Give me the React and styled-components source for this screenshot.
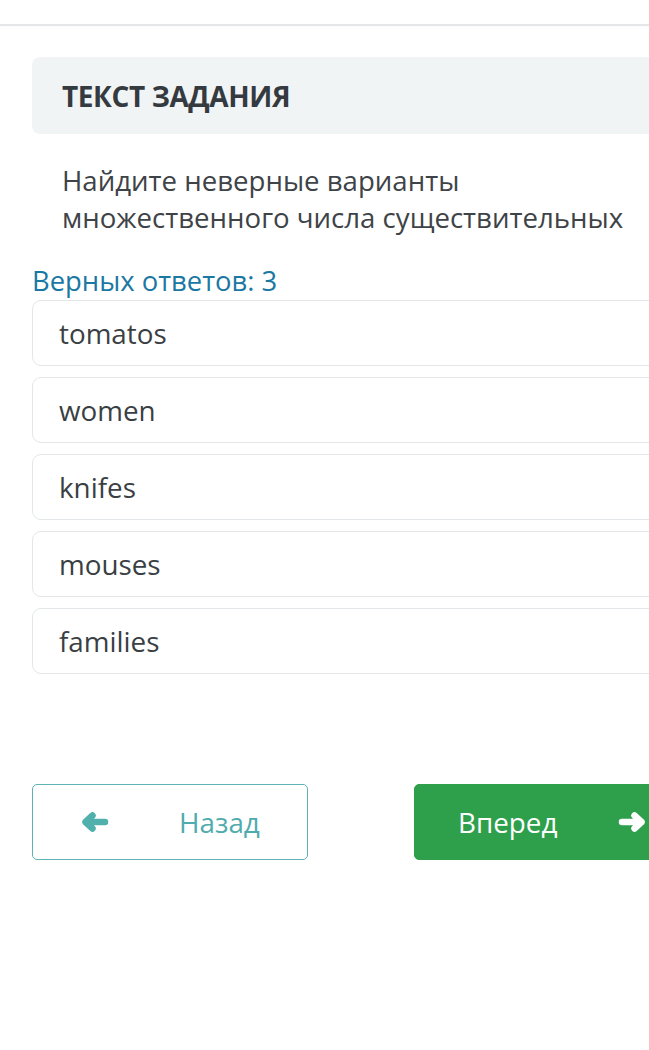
import React from "react";
import styled, { createGlobalStyle } from "styled-components";

const Global = createGlobalStyle`
  html, body { margin: 0; padding: 0; background: #fff; overflow: hidden; }
  body { font-family: "Open Sans", "Noto Sans", sans-serif; }
`;

const TopBar = styled.div`
  height: 24px;
  border-bottom: 2px solid #e4e6e7;
  box-shadow: 0 2px 3px rgba(0,0,0,0.02);
`;

const Main = styled.main`
  width: 656px;
  padding: 31px 0 0 32px;
  display: flex;
  flex-direction: column;
`;

const HeaderBox = styled.div`
  height: 77px;
  background: #f1f4f5;
  border-radius: 8px;
  display: flex;
  align-items: center;
  padding-left: 30px;
`;

const Title = styled.h2`
  margin: 0;
  font-size: 28px;
  font-weight: 700;
  color: #343a40;
  letter-spacing: -0.4px;
`;

const Question = styled.p`
  margin: 28px 0 0 30px;
  font-size: 27.6px;
  line-height: 37px;
  color: #3e4347;
  width: 600px;
`;

const Counter = styled.div`
  margin-top: 28px;
  font-size: 27.4px;
  line-height: 34px;
  color: #1b78a3;
  margin-bottom: 2px;
`;

const Options = styled.div`
  display: flex;
  flex-direction: column;
  gap: 11px;
`;

const Option = styled.div`
  height: 64px;
  border: 1px solid #e3e7e9;
  border-radius: 9px;
  display: flex;
  align-items: center;
  padding-left: 26px;
  font-size: 27.8px;
  color: #3a3f44;
`;

const Buttons = styled.div`
  display: flex;
  gap: 106px;
  margin-top: 110px;
`;

const Button = styled.button`
  width: 276px;
  height: 76px;
  box-sizing: border-box;
  border-radius: 5px;
  font-family: inherit;
  font-size: 27.8px;
  display: flex;
  align-items: center;
  padding: 0;
  border: 1px solid ${p => (p.$primary ? "#2e9f4b" : "#5cb3b5")};
  background: ${p => (p.$primary ? "#2e9f4b" : "#fff")};
  color: ${p => (p.$primary ? "#fff" : "#4fabad")};
  flex-shrink: 0;
`;

const ArrowSvg = styled.svg`
  width: 28px;
  height: 20px;
  flex-shrink: 0;
  margin-left: ${p => p.$ml}px;
`;

const BackLabel = styled.span`
  margin-left: 70px;
`;

const NextLabel = styled.span`
  margin-left: 43px;
`;

function Arrow({ dir, color, ml }) {
  const d = dir === "left" ? "M11.5 3.5 L4.5 10 L11.5 16.5 M4.5 10 H24" : "M16.5 3.5 L23.5 10 L16.5 16.5 M23.5 10 H4";
  return (
    <ArrowSvg viewBox="0 0 28 20" $ml={ml}>
      <path d={d} fill="none" stroke={color} strokeWidth="6.5" strokeLinecap="round" strokeLinejoin="round" />
    </ArrowSvg>
  );
}

const options = ["tomatos", "women", "knifes", "mouses", "families"];

export default function App() {
  return (
    <>
      <Global />
      <TopBar />
      <Main>
        <HeaderBox>
          <Title>ТЕКСТ ЗАДАНИЯ</Title>
        </HeaderBox>
        <Question>Найдите неверные варианты множественного числа существительных</Question>
        <Counter>Верных ответов: 3</Counter>
        <Options>
          {options.map(o => (
            <Option key={o}>{o}</Option>
          ))}
        </Options>
        <Buttons>
          <Button>
            <Arrow dir="left" color="#4fb0ac" ml={48} />
            <BackLabel>Назад</BackLabel>
          </Button>
          <Button $primary>
            <NextLabel>Вперед</NextLabel>
            <Arrow dir="right" color="#fff" ml={61} />
          </Button>
        </Buttons>
      </Main>
    </>
  );
}
